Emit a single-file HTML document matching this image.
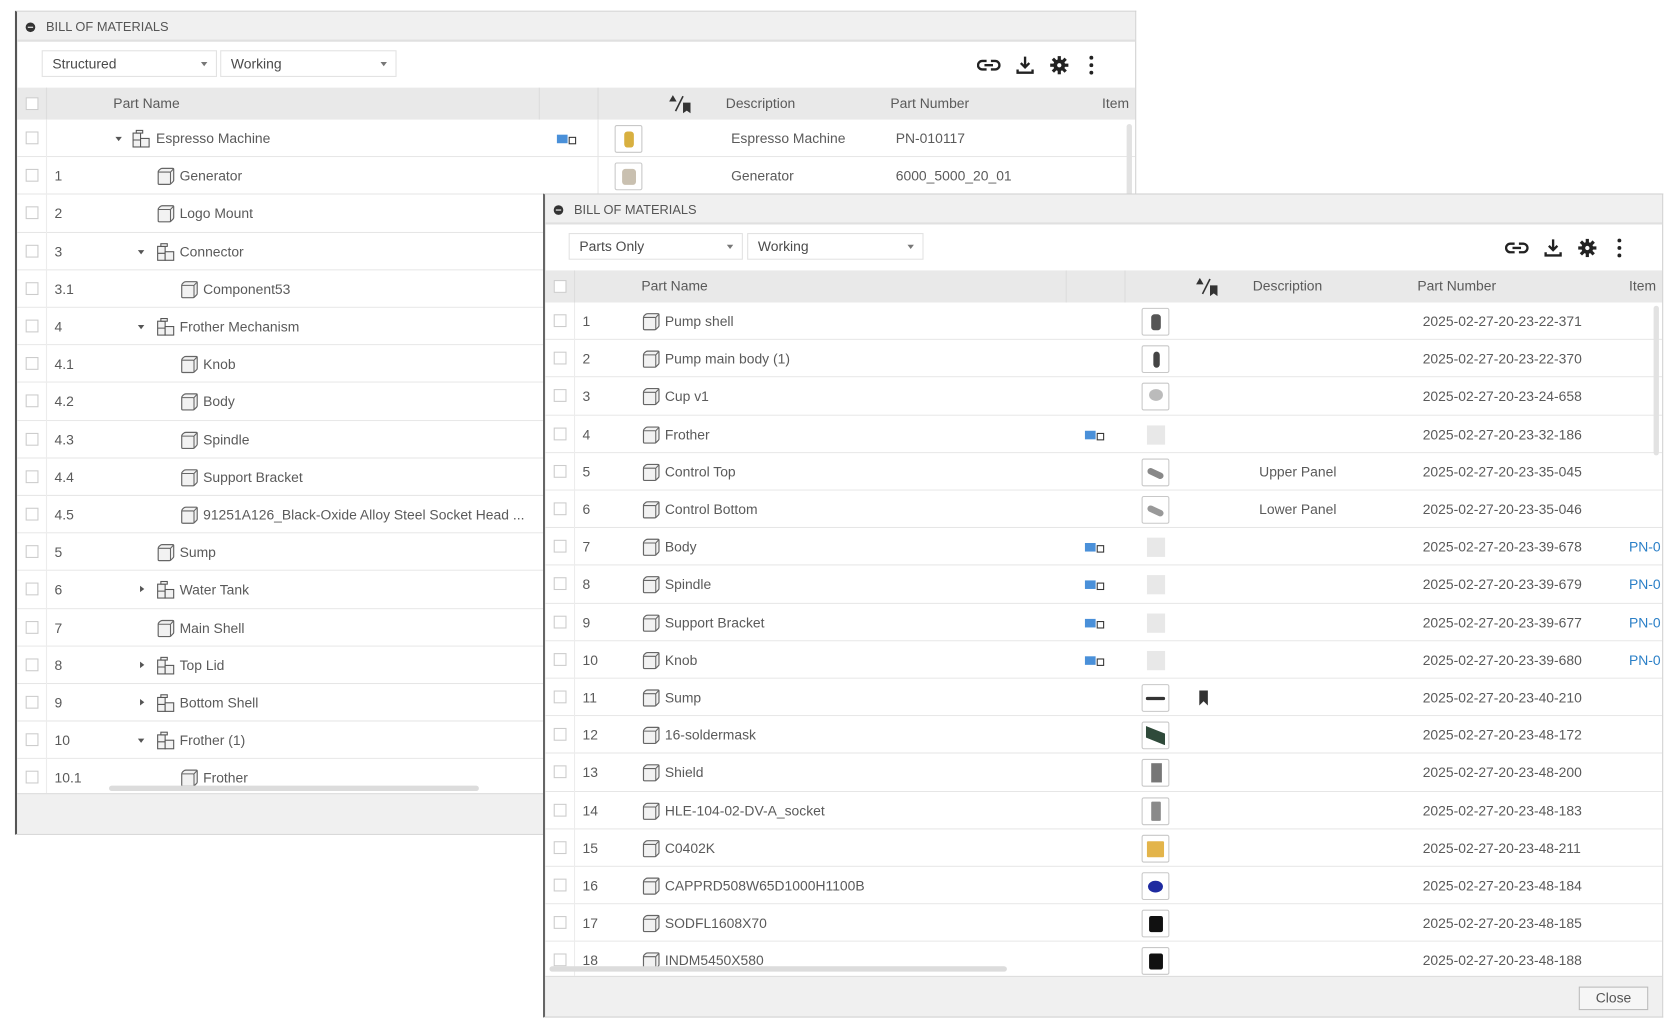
<!DOCTYPE html>
<html><head><meta charset="utf-8"><style>
*{box-sizing:border-box;margin:0;padding:0}
body{width:1676px;height:1030px;background:#fff;overflow:hidden;font-family:"Liberation Sans",sans-serif}
#s{position:absolute;left:0;top:0;width:1568px;height:964px;transform:scale(1.0689);transform-origin:0 0}
.p{position:absolute;background:#fff;border:1px solid #d0d0d0;overflow:hidden}
.hd{position:absolute;left:0;right:0;top:0;height:28px;background:#f0f0f0;border-bottom:2px solid #e0e0e0;font-size:12px;color:#555;line-height:28px;padding-left:27px}
.hd i{position:absolute;left:8px;top:10px;width:9px;height:9px;border-radius:50%;background:#333}
.hd i:after{content:"";position:absolute;left:2px;top:4px;width:5px;height:1px;background:#fff}
.dd{position:absolute;height:25px;border:1px solid #e2e2e2;font-size:13px;color:#4a4a4a;line-height:23px;padding-left:9px;background:#fff}
.dd:after{content:"";position:absolute;right:8px;top:10px;border:3.5px solid transparent;border-top:4px solid #777}
.th{position:absolute;left:0;right:0;height:30px;background:#e9e9e9;font-size:13px;color:#5a5a5a;line-height:30px}
.th span,.r span{position:absolute;white-space:nowrap}
.cb{position:absolute;width:12px;height:12px;border:1px solid #ccc;background:#fff}
.r{position:absolute;left:0;right:0;height:35.2px;border-bottom:1px solid #e6e6e6;font-size:13px;color:#5a5a5a;line-height:35px;background:#fff}
.r .cb{top:11px}
.r svg{position:absolute}
.vl{position:absolute;width:1px;background:#dcdcdc}
.tb{position:absolute;top:5px;width:26px;height:26px;border:1px solid #c8c8c8;border-radius:2px;background:#fff}
.tb b{position:absolute;left:6px;top:5px;width:13px;height:15px;border-radius:3px}
.eg{position:absolute;top:9px;width:17px;height:18px;background:#e8e8e8}
.bi{position:absolute;top:14px;width:10px;height:8px;background:#4a90d9}
.bi:after{content:"";position:absolute;left:11px;top:2px;width:5px;height:5px;border:1px solid #333;background:#fff}
.ft{position:absolute;left:0;right:0;background:#f0f0f0;border-top:1px solid #ddd}
.car{position:absolute;top:16px;border:3.5px solid transparent;border-top:4px solid #555}
.carr{position:absolute;top:14px;border:3.5px solid transparent;border-left:4px solid #555}
.blue{color:#2a7fc7}
</style></head><body>
<svg width="0" height="0" style="position:absolute">
<symbol id="cp" viewBox="0 0 18 18"><path d="M2 5 Q2 4 3 3 L4.5 1.8 Q5 1.5 6 1.5 H15.5 Q16.5 1.5 16.5 2.5 V12.5 Q16.5 13.3 16 13.8 L14 15.8 Q13.3 16.5 12.5 16.5 H3 Q2 16.5 2 15.5Z" fill="#f2f2f2" stroke="#666" stroke-width="1.1"/><path d="M2.3 5 H12.5 Q13.5 5 13.5 6 V16.3 M13.5 5 L16.3 2" fill="none" stroke="#666" stroke-width="1"/></symbol>
<symbol id="as" viewBox="0 0 18 18"><rect x="1.5" y="3.5" width="7" height="13" fill="#f2f2f2" stroke="#555"/><rect x="8.5" y="8.5" width="8" height="8" fill="#f2f2f2" stroke="#555"/><rect x="4.5" y="1" width="6" height="2.5" fill="#f2f2f2" stroke="#555"/><line x1="1.5" y1="10" x2="8.5" y2="10" stroke="#555"/></symbol>
<symbol id="tools" viewBox="0 0 120 24"><g fill="none" stroke="#222" stroke-width="2.2"><path d="M9 8 H5 a4 4 0 0 0 0 8 H9 M13 8 H17 a4 4 0 0 1 0 8 H13 M7 12 H15"/><path d="M45 4 V14 M41 10 L45 14 L49 10 M38 16 V19 H52 V16"/></g><g fill="#222"><circle cx="77" cy="12" r="5.5"/><rect x="75.5" y="3.5" width="3" height="17"/><rect x="68.5" y="10.5" width="17" height="3"/><rect x="75.5" y="3.5" width="3" height="17" transform="rotate(45 77 12)"/><rect x="75.5" y="3.5" width="3" height="17" transform="rotate(-45 77 12)"/><circle cx="107" cy="5" r="1.8"/><circle cx="107" cy="12" r="1.8"/><circle cx="107" cy="19" r="1.8"/></g><circle cx="77" cy="12" r="2" fill="#fff"/></symbol>
<symbol id="sb" viewBox="0 0 26 20"><path d="M2 8 L5.5 2 L9 8Z" fill="#333"/><line x1="8" y1="17" x2="15" y2="3" stroke="#333" stroke-width="1.5"/><path d="M15 9 H22 V19 L18.5 16.5 L15 19Z" fill="#333"/></symbol>
</svg>
<div id="s">
<!-- PANEL 1 -->
<div class="p" style="left:14px;top:10px;width:1049px;height:771px;border-left:2px solid #555">
<div class="hd"><i></i>BILL OF MATERIALS</div>
<div class="dd" style="left:23px;top:36px;width:164px">Structured</div>
<div class="dd" style="left:190px;top:36px;width:165px">Working</div>
<svg style="position:absolute;left:898px;top:38px" width="120" height="24"><use href="#tools"/></svg>
<div class="th" style="top:71px"><span class="cb" style="left:8px;top:9px"></span><span style="left:90px">Part Name</span><span style="left:608px;top:5px"><svg width="26" height="20"><use href="#sb"/></svg></span><span style="left:663px">Description</span><span style="left:817px">Part Number</span><span style="left:1015px">Item</span></div>
<div class="vl" style="left:27px;top:71px;height:30px;background:#ddd"></div>
<div class="vl" style="left:488px;top:71px;height:30px"></div>
<div class="vl" style="left:543px;top:71px;height:30px"></div>
<div style="position:absolute;left:0;right:0;top:101px">
<div class="r" style="top:0"><span class="cb" style="left:8px"></span><span class="car" style="left:92px"></span><svg style="left:107px;top:9px" width="18" height="18"><use href="#as"/></svg><span style="left:130px">Espresso Machine</span><span class="bi" style="left:505px"></span><span class="tb" style="left:559px"><b style="background:#d8b040;width:9px;left:8px"></b></span><span style="left:668px">Espresso Machine</span><span style="left:822px">PN-010117</span></div>
<div class="r" style="top:35.2px"><span class="cb" style="left:8px"></span><span style="left:35px">1</span><svg style="left:130px;top:9px" width="18" height="18"><use href="#cp"/></svg><span style="left:152px">Generator</span><span class="tb" style="left:559px"><b style="background:#c9c0b0"></b></span><span style="left:668px">Generator</span><span style="left:822px">6000_5000_20_01</span></div>
<div class="r" style="top:70.4px"><span class="cb" style="left:8px"></span><span style="left:35px">2</span><svg style="left:130px;top:9px" width="18" height="18"><use href="#cp"/></svg><span style="left:152px">Logo Mount</span></div>
<div class="r" style="top:105.6px"><span class="cb" style="left:8px"></span><span style="left:35px">3</span><span class="car" style="left:113px"></span><svg style="left:130px;top:9px" width="18" height="18"><use href="#as"/></svg><span style="left:152px">Connector</span></div>
<div class="r" style="top:140.8px"><span class="cb" style="left:8px"></span><span style="left:35px">3.1</span><svg style="left:152px;top:9px" width="18" height="18"><use href="#cp"/></svg><span style="left:174px">Component53</span></div>
<div class="r" style="top:176px"><span class="cb" style="left:8px"></span><span style="left:35px">4</span><span class="car" style="left:113px"></span><svg style="left:130px;top:9px" width="18" height="18"><use href="#as"/></svg><span style="left:152px">Frother Mechanism</span></div>
<div class="r" style="top:211.2px"><span class="cb" style="left:8px"></span><span style="left:35px">4.1</span><svg style="left:152px;top:9px" width="18" height="18"><use href="#cp"/></svg><span style="left:174px">Knob</span></div>
<div class="r" style="top:246.4px"><span class="cb" style="left:8px"></span><span style="left:35px">4.2</span><svg style="left:152px;top:9px" width="18" height="18"><use href="#cp"/></svg><span style="left:174px">Body</span></div>
<div class="r" style="top:281.6px"><span class="cb" style="left:8px"></span><span style="left:35px">4.3</span><svg style="left:152px;top:9px" width="18" height="18"><use href="#cp"/></svg><span style="left:174px">Spindle</span></div>
<div class="r" style="top:316.8px"><span class="cb" style="left:8px"></span><span style="left:35px">4.4</span><svg style="left:152px;top:9px" width="18" height="18"><use href="#cp"/></svg><span style="left:174px">Support Bracket</span></div>
<div class="r" style="top:352px"><span class="cb" style="left:8px"></span><span style="left:35px">4.5</span><svg style="left:152px;top:9px" width="18" height="18"><use href="#cp"/></svg><span style="left:174px">91251A126_Black-Oxide Alloy Steel Socket Head ...</span></div>
<div class="r" style="top:387.2px"><span class="cb" style="left:8px"></span><span style="left:35px">5</span><svg style="left:130px;top:9px" width="18" height="18"><use href="#cp"/></svg><span style="left:152px">Sump</span></div>
<div class="r" style="top:422.4px"><span class="cb" style="left:8px"></span><span style="left:35px">6</span><span class="carr" style="left:115px"></span><svg style="left:130px;top:9px" width="18" height="18"><use href="#as"/></svg><span style="left:152px">Water Tank</span></div>
<div class="r" style="top:457.6px"><span class="cb" style="left:8px"></span><span style="left:35px">7</span><svg style="left:130px;top:9px" width="18" height="18"><use href="#cp"/></svg><span style="left:152px">Main Shell</span></div>
<div class="r" style="top:492.8px"><span class="cb" style="left:8px"></span><span style="left:35px">8</span><span class="carr" style="left:115px"></span><svg style="left:130px;top:9px" width="18" height="18"><use href="#as"/></svg><span style="left:152px">Top Lid</span></div>
<div class="r" style="top:528px"><span class="cb" style="left:8px"></span><span style="left:35px">9</span><span class="carr" style="left:115px"></span><svg style="left:130px;top:9px" width="18" height="18"><use href="#as"/></svg><span style="left:152px">Bottom Shell</span></div>
<div class="r" style="top:563.2px"><span class="cb" style="left:8px"></span><span style="left:35px">10</span><span class="car" style="left:113px"></span><svg style="left:130px;top:9px" width="18" height="18"><use href="#as"/></svg><span style="left:152px">Frother (1)</span></div>
<div class="r" style="top:598.4px"><span class="cb" style="left:8px"></span><span style="left:35px">10.1</span><svg style="left:152px;top:9px" width="18" height="18"><use href="#cp"/></svg><span style="left:174px">Frother</span></div>
</div>
<div class="vl" style="left:27px;top:101px;height:630px;background:#ececec"></div>
<div class="vl" style="left:543px;top:101px;height:70px;background:#e6e6e6"></div>
<div style="position:absolute;left:1038px;top:105px;width:5px;height:68px;background:#e2e2e2;border-radius:3px"></div>
<div style="position:absolute;left:86px;top:724px;width:346px;height:5px;background:#dcdcdc;border-radius:3px"></div>
<div class="ft" style="top:731px;height:40px"></div>
</div>
<!-- PANEL 2 -->
<div class="p" style="left:508px;top:181px;width:1048px;height:771px;border-left:2px solid #666">
<div class="hd"><i></i>BILL OF MATERIALS</div>
<div class="dd" style="left:22px;top:36px;width:163px">Parts Only</div>
<div class="dd" style="left:189px;top:36px;width:165px">Working</div>
<svg style="position:absolute;left:898px;top:38px" width="120" height="24"><use href="#tools"/></svg>
<div class="th" style="top:71px"><span class="cb" style="left:8px;top:9px"></span><span style="left:90px">Part Name</span><span style="left:607px;top:5px"><svg width="26" height="20"><use href="#sb"/></svg></span><span style="left:662px">Description</span><span style="left:816px">Part Number</span><span style="left:1014px">Item</span></div>
<div class="vl" style="left:27px;top:71px;height:30px;background:#ddd"></div>
<div class="vl" style="left:487px;top:71px;height:30px"></div>
<div class="vl" style="left:542px;top:71px;height:30px"></div>
<div style="position:absolute;left:0;right:0;top:101px">
<div class="r" style="top:0"><span class="cb" style="left:8px"></span><span style="left:35px">1</span><svg style="left:90px;top:9px" width="18" height="18"><use href="#cp"/></svg><span style="left:112px">Pump shell</span><span class="tb" style="left:558px"><b style="background:#555;width:9px;left:8px"></b></span><span style="left:821px">2025-02-27-20-23-22-371</span></div>
<div class="r" style="top:35.2px"><span class="cb" style="left:8px"></span><span style="left:35px">2</span><svg style="left:90px;top:9px" width="18" height="18"><use href="#cp"/></svg><span style="left:112px">Pump main body (1)</span><span class="tb" style="left:558px"><b style="background:#444;width:6px;left:10px"></b></span><span style="left:821px">2025-02-27-20-23-22-370</span></div>
<div class="r" style="top:70.4px"><span class="cb" style="left:8px"></span><span style="left:35px">3</span><svg style="left:90px;top:9px" width="18" height="18"><use href="#cp"/></svg><span style="left:112px">Cup v1</span><span class="tb" style="left:558px"><b style="background:#bbb;border-radius:50%;height:11px"></b></span><span style="left:821px">2025-02-27-20-23-24-658</span></div>
<div class="r" style="top:105.6px"><span class="cb" style="left:8px"></span><span style="left:35px">4</span><svg style="left:90px;top:9px" width="18" height="18"><use href="#cp"/></svg><span style="left:112px">Frother</span><span class="bi" style="left:505px"></span><span class="eg" style="left:563px"></span><span style="left:821px">2025-02-27-20-23-32-186</span></div>
<div class="r" style="top:140.8px"><span class="cb" style="left:8px"></span><span style="left:35px">5</span><svg style="left:90px;top:9px" width="18" height="18"><use href="#cp"/></svg><span style="left:112px">Control Top</span><span class="tb" style="left:558px"><b style="background:#888;height:6px;top:10px;transform:rotate(25deg);width:16px;left:4px"></b></span><span style="left:668px">Upper Panel</span><span style="left:821px">2025-02-27-20-23-35-045</span></div>
<div class="r" style="top:176px"><span class="cb" style="left:8px"></span><span style="left:35px">6</span><svg style="left:90px;top:9px" width="18" height="18"><use href="#cp"/></svg><span style="left:112px">Control Bottom</span><span class="tb" style="left:558px"><b style="background:#999;height:6px;top:10px;transform:rotate(25deg);width:16px;left:4px"></b></span><span style="left:668px">Lower Panel</span><span style="left:821px">2025-02-27-20-23-35-046</span></div>
<div class="r" style="top:211.2px"><span class="cb" style="left:8px"></span><span style="left:35px">7</span><svg style="left:90px;top:9px" width="18" height="18"><use href="#cp"/></svg><span style="left:112px">Body</span><span class="bi" style="left:505px"></span><span class="eg" style="left:563px"></span><span style="left:821px">2025-02-27-20-23-39-678</span><span class="blue" style="left:1014px">PN-0</span></div>
<div class="r" style="top:246.4px"><span class="cb" style="left:8px"></span><span style="left:35px">8</span><svg style="left:90px;top:9px" width="18" height="18"><use href="#cp"/></svg><span style="left:112px">Spindle</span><span class="bi" style="left:505px"></span><span class="eg" style="left:563px"></span><span style="left:821px">2025-02-27-20-23-39-679</span><span class="blue" style="left:1014px">PN-0</span></div>
<div class="r" style="top:281.6px"><span class="cb" style="left:8px"></span><span style="left:35px">9</span><svg style="left:90px;top:9px" width="18" height="18"><use href="#cp"/></svg><span style="left:112px">Support Bracket</span><span class="bi" style="left:505px"></span><span class="eg" style="left:563px"></span><span style="left:821px">2025-02-27-20-23-39-677</span><span class="blue" style="left:1014px">PN-0</span></div>
<div class="r" style="top:316.8px"><span class="cb" style="left:8px"></span><span style="left:35px">10</span><svg style="left:90px;top:9px" width="18" height="18"><use href="#cp"/></svg><span style="left:112px">Knob</span><span class="bi" style="left:505px"></span><span class="eg" style="left:563px"></span><span style="left:821px">2025-02-27-20-23-39-680</span><span class="blue" style="left:1014px">PN-0</span></div>
<div class="r" style="top:352px"><span class="cb" style="left:8px"></span><span style="left:35px">11</span><svg style="left:90px;top:9px" width="18" height="18"><use href="#cp"/></svg><span style="left:112px">Sump</span><span class="tb" style="left:558px"><b style="background:#333;height:3px;top:11px;width:18px;left:3px"></b></span><svg style="left:611px;top:10px" width="10" height="16"><path d="M1 1 H9 V15 L5 11 L1 15Z" fill="#333"/></svg><span style="left:821px">2025-02-27-20-23-40-210</span></div>
<div class="r" style="top:387.2px"><span class="cb" style="left:8px"></span><span style="left:35px">12</span><svg style="left:90px;top:9px" width="18" height="18"><use href="#cp"/></svg><span style="left:112px">16-soldermask</span><span class="tb" style="left:558px"><b style="background:#2f4a3a;left:3px;top:3px;width:18px;height:18px;border-radius:0;clip-path:polygon(0 0,100% 40%,100% 100%,0 60%)"></b></span><span style="left:821px">2025-02-27-20-23-48-172</span></div>
<div class="r" style="top:422.4px"><span class="cb" style="left:8px"></span><span style="left:35px">13</span><svg style="left:90px;top:9px" width="18" height="18"><use href="#cp"/></svg><span style="left:112px">Shield</span><span class="tb" style="left:558px"><b style="background:#777;border-radius:0;width:10px;left:8px;height:18px;top:3px"></b></span><span style="left:821px">2025-02-27-20-23-48-200</span></div>
<div class="r" style="top:457.6px"><span class="cb" style="left:8px"></span><span style="left:35px">14</span><svg style="left:90px;top:9px" width="18" height="18"><use href="#cp"/></svg><span style="left:112px">HLE-104-02-DV-A_socket</span><span class="tb" style="left:558px"><b style="background:#8a8a8a;border-radius:1px;width:9px;left:8px;height:18px;top:3px"></b></span><span style="left:821px">2025-02-27-20-23-48-183</span></div>
<div class="r" style="top:492.8px"><span class="cb" style="left:8px"></span><span style="left:35px">15</span><svg style="left:90px;top:9px" width="18" height="18"><use href="#cp"/></svg><span style="left:112px">C0402K</span><span class="tb" style="left:558px"><b style="background:#e3b44a;border-radius:1px;width:16px;left:4px"></b></span><span style="left:821px">2025-02-27-20-23-48-211</span></div>
<div class="r" style="top:528px"><span class="cb" style="left:8px"></span><span style="left:35px">16</span><svg style="left:90px;top:9px" width="18" height="18"><use href="#cp"/></svg><span style="left:112px">CAPPRD508W65D1000H1100B</span><span class="tb" style="left:558px"><b style="background:#1e2aa0;border-radius:50%;width:14px;height:11px;left:5px;top:7px"></b></span><span style="left:821px">2025-02-27-20-23-48-184</span></div>
<div class="r" style="top:563.2px"><span class="cb" style="left:8px"></span><span style="left:35px">17</span><svg style="left:90px;top:9px" width="18" height="18"><use href="#cp"/></svg><span style="left:112px">SODFL1608X70</span><span class="tb" style="left:558px"><b style="background:#111;border-radius:2px"></b></span><span style="left:821px">2025-02-27-20-23-48-185</span></div>
<div class="r" style="top:598.4px"><span class="cb" style="left:8px"></span><span style="left:35px">18</span><svg style="left:90px;top:9px" width="18" height="18"><use href="#cp"/></svg><span style="left:112px">INDM5450X580</span><span class="tb" style="left:558px"><b style="background:#111;border-radius:2px"></b></span><span style="left:821px">2025-02-27-20-23-48-188</span></div>
</div>
<div class="vl" style="left:27px;top:101px;height:630px;background:#ececec"></div>
<div style="position:absolute;left:1037px;top:104px;width:5px;height:140px;background:#e2e2e2;border-radius:3px"></div>
<div style="position:absolute;left:4px;top:722px;width:428px;height:5px;background:#dcdcdc;border-radius:3px"></div>
<div class="ft" style="top:731px;height:40px"><div style="position:absolute;left:967px;top:9px;width:65px;height:22px;border:1px solid #bbb;background:#f6f6f6;font-size:13px;color:#555;text-align:center;line-height:20px">Close</div></div>
</div>
</div>
</body></html>
